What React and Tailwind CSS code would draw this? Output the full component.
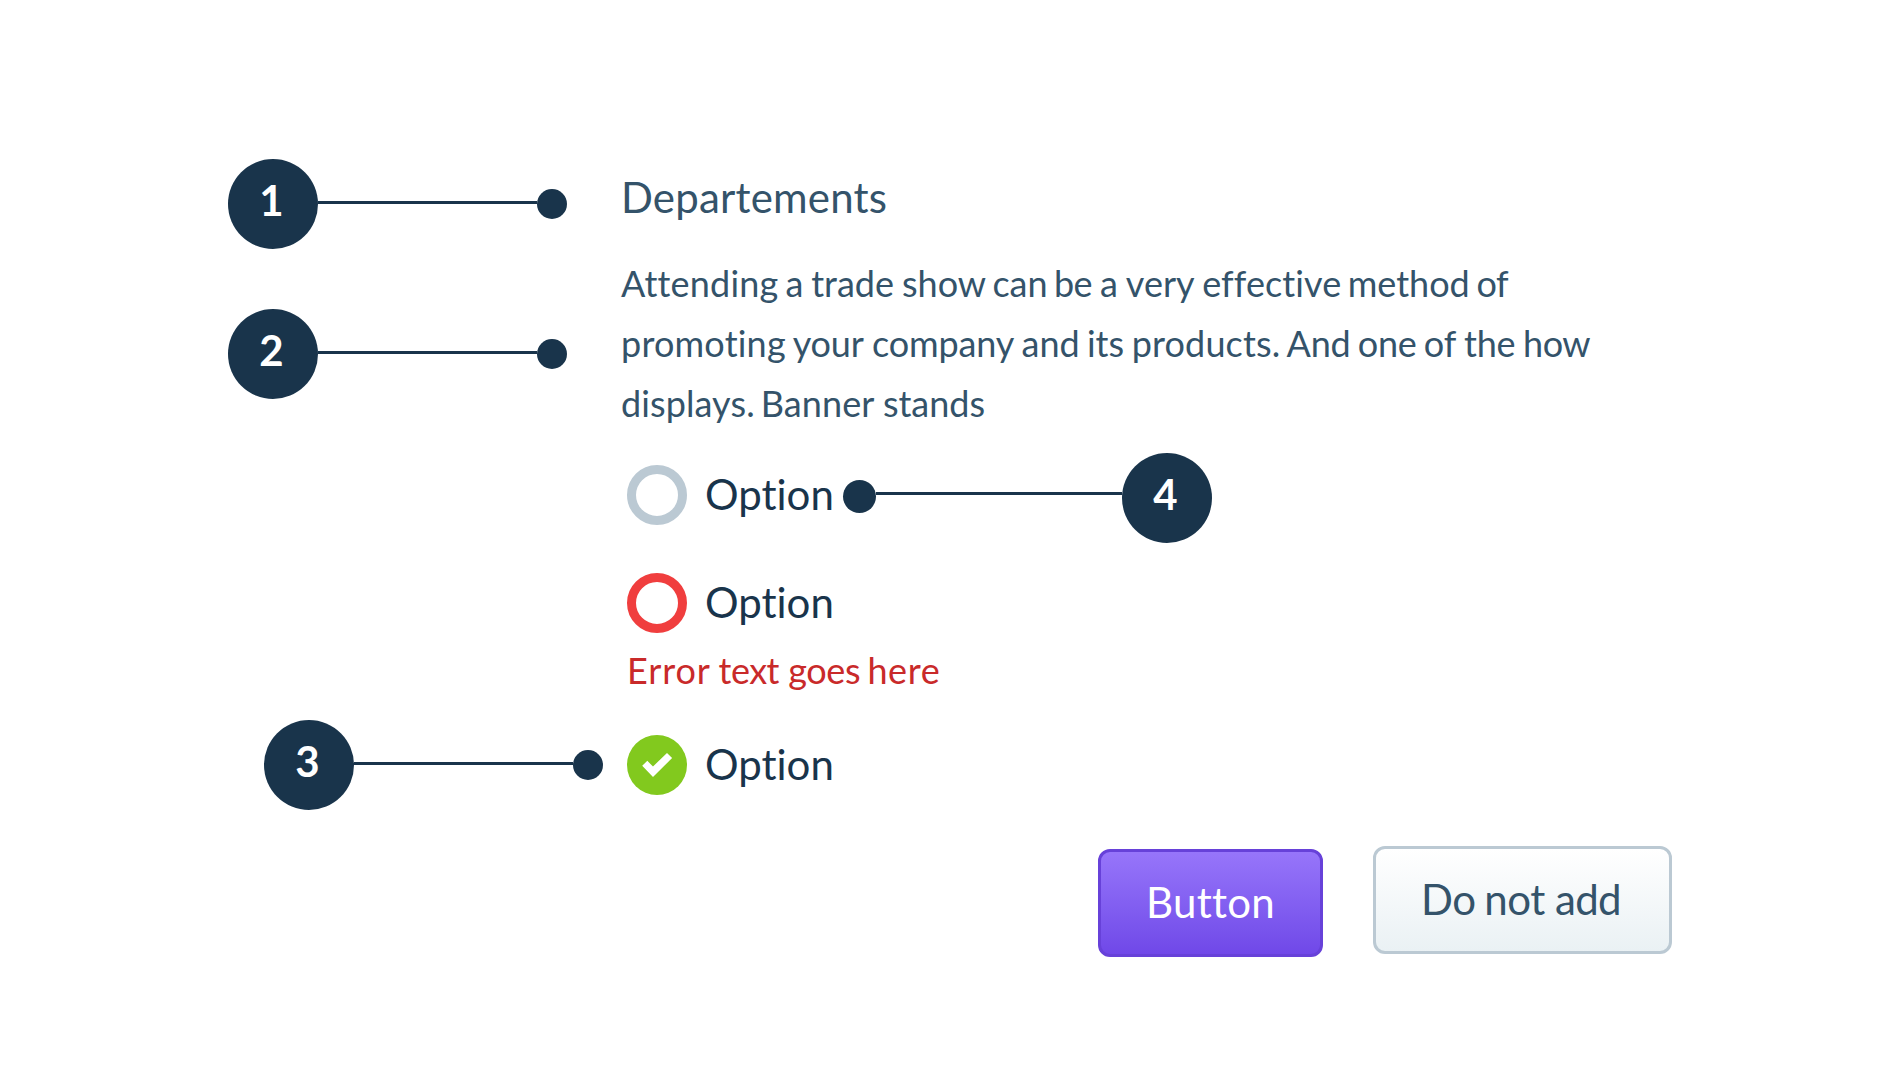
import React from "react";

function Badge({ children }) {
  return (
    <div className="flex h-[90px] w-[90px] shrink-0 justify-center rounded-full bg-[#19344b] pr-[3px] pt-[11px] text-[42px] font-bold leading-[60px] text-white">
      {children}
    </div>
  );
}

function Callout({ number, className = "" }) {
  return (
    <div className={`flex items-center ${className}`}>
      <Badge>{number}</Badge>
      <div className="mb-[3px] h-[3px] w-[219px] bg-[#19344b]" />
      <div className="h-[30px] w-[30px] rounded-full bg-[#19344b]" />
    </div>
  );
}

function Ring({ className }) {
  return <span className={`h-[60px] w-[60px] rounded-full border-[9px] bg-white ${className}`} />;
}

function Check() {
  return (
    <svg viewBox="0 0 60 60" className="h-[60px] w-[60px] rounded-full bg-[#82c91e]" fill="#fff">
      <path d="M15.2 30.8 L20.3 25.8 L26 31.5 L40 17.9 L45.1 23 L26 42.1 Z" />
    </svg>
  );
}

function Option({ control, className = "" }) {
  return (
    <label className={`flex h-[60px] ${className}`}>
      {control}
      <span className="-mt-px ml-[18px] text-[42px] leading-[60px] text-[#19344b]">Option</span>
    </label>
  );
}

// Each word is [text, advance to the next word, tracking].
function Line({ words }) {
  return (
    <span className="flex whitespace-pre">
      {words.map(([text, advance, tracking = 0], i) => (
        <span key={i} className="shrink-0" style={{ width: advance, letterSpacing: tracking }}>
          {text + (i < words.length - 1 ? " " : "")}
        </span>
      ))}
    </span>
  );
}

const body = [
  [["Attending", 164.5, 0.2], ["a", 25.7], ["trade", 90.8], ["show", 90.4], ["can", 61.5], ["be", 46.2, -0.5], ["a", 25.8], ["very", 76.3], ["effective", 145.5, 0.1], ["method", 128.8], ["of", 33, -0.5]],
  [["promoting", 171.7, 0.2], ["your", 79.3, -0.15], ["company", 149.5, -0.15], ["and", 65.5], ["its", 44.7], ["products.", 154.9, 0.15], ["And", 71.3, -0.2], ["one", 65.8, -0.3], ["of", 40.3], ["the", 59.1, -0.2], ["how", 68, -0.5]],
  [["displays.", 139.7, 0.1], ["Banner", 122.2, 0.1], ["stands", 104]],
];

export default function App() {
  return (
    <main className="flex h-[1068px] w-[1890px] overflow-hidden bg-white font-['Lato',sans-serif] text-[#34536a] [font-variant-ligatures:none]">
      <aside className="w-[621px] shrink-0 pl-[228px] pt-[159px]">
        <Callout number="1" />
        <Callout number="2" className="mt-[60px]" />
        <Callout number="3" className="ml-9 mt-[321px]" />
      </aside>
      <section className="w-[1051px] pt-[167px]">
        <h1 className="text-[42px] leading-[60px] tracking-[0.2px]">Departements</h1>
        <p className="mt-[26px] text-[36px] leading-[60px]">
          {body.map((words, i) => (
            <Line key={i} words={words} />
          ))}
        </p>
        <div className="mt-5 flex h-[90px] pl-1.5">
          <Option control={<Ring className="border-[#bbc9d3]" />} className="mt-3 w-[216px]" />
          <div className="mt-[27px] h-[33px] w-[33px] rounded-full bg-[#19344b]" />
          <div className="mt-[39px] h-[3px] w-[246px] bg-[#19344b]" />
          <Badge>4</Badge>
        </div>
        <div className="mt-[30px] pl-1.5">
          <Option control={<Ring className="border-[#f03e3e]" />} />
          <p className="mt-[7px] text-[36px] leading-[60px] text-[#c92a2a]">
            <Line words={[["Error", 91.6, 0.9], ["text", 69.7, -0.5], ["goes", 79.1, -0.4], ["here", 74, 0.6]]} />
          </p>
          <Option control={<Check />} className="mt-[35px]" />
        </div>
        <div className="mt-[51px] flex items-start justify-end gap-[50px]">
          <button className="mt-[3px] h-[108px] w-[225px] rounded-xl border-[3px] border-[#6741d9] bg-gradient-to-b from-[#9775fa] to-[#7048e8] pb-0.5 text-[42px] leading-[60px] tracking-[0.3px] text-white">
            Button
          </button>
          <button className="flex h-[108px] w-[299px] items-center rounded-xl border-[3px] border-[#bbc9d3] bg-gradient-to-b from-white to-[#eaf1f4] pb-0.5 pl-[45px] text-left text-[42px] leading-[60px]">
            <Line words={[["Do", 63.2, -0.3], ["not", 70.8, -0.4], ["add", 70, -0.7]]} />
          </button>
        </div>
      </section>
    </main>
  );
}
